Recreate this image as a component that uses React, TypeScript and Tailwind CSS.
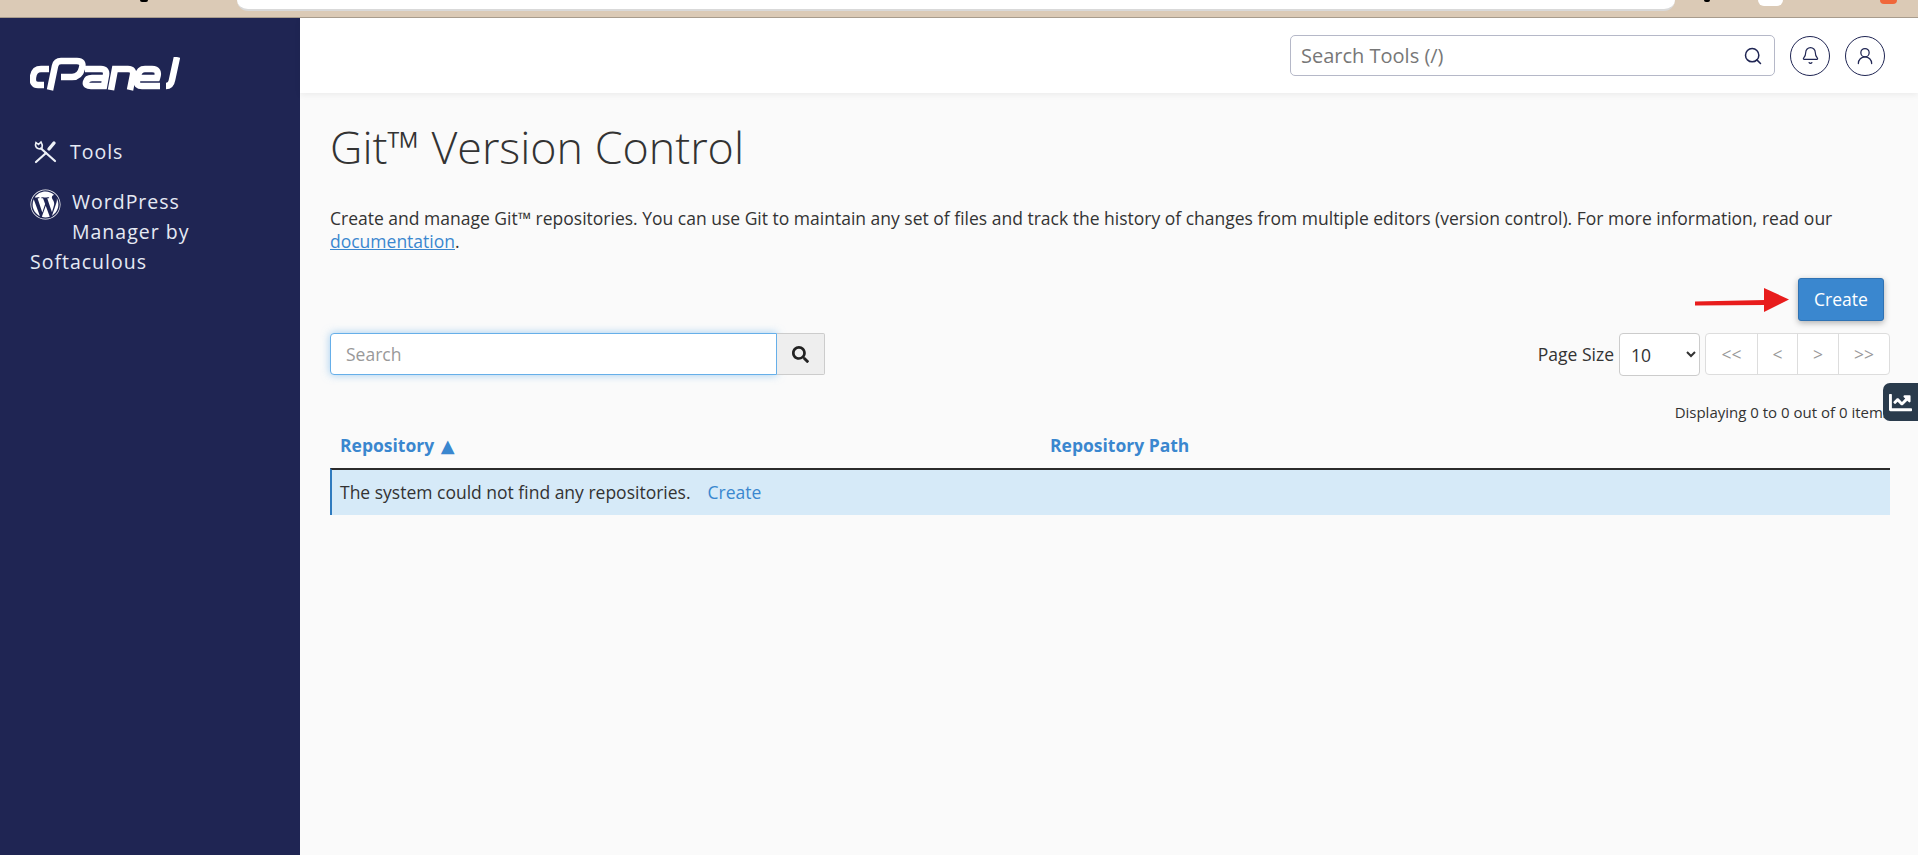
import { FaChartLine, FaSearch, FaWordpress } from "react-icons/fa";
import { Bell, Search, UserRound } from "lucide-react";

const CpanelLogo = () => (
  <svg width="150" height="34" viewBox="0 0 150 34" fill="none" stroke="#fff" strokeWidth="6.5" className="block">
    <path d="M19 12 H11 Q4 12 3 20 Q2 28 8 28 H14" />
    <path d="M20 33 L25 9 Q26 4 31 4 H47 Q54 4 52 11 Q50 20 42 20 H31" />
    <path d="M55 12 H71 Q77 12 76 18 L74 29 H61 Q55 29 56 25 Q57 21 62 21 H75" />
    <path d="M81 33 L85 12 H98 Q104 12 103 18 L100 33" />
    <path d="M108 21 H127 Q130 12 122 12 H115 Q109 12 108 19 L107 24 Q106 29 112 29 H130" />
    <path d="M147 0 L142 23 Q141 29 136 29" />
  </svg>
);

const ToolsIcon = () => (
  <svg width="24" height="24" viewBox="0 0 24 24" fill="none" stroke="#eef1f7" strokeWidth="2.2" strokeLinecap="round">
    <path d="M3 22 L13 13" />
    <path d="M16 9 L21 3" strokeWidth="3.4" />
    <path d="M8 8.5 L22 21" />
    <path d="M8 2 L5.5 4.5 L3 2.5 Q1.5 7 5 8.5 Q7 9.5 9 8 Q10 5 8 2 Z" strokeWidth="1.6" />
  </svg>
);

const RedArrow = () => (
  <svg width="94" height="26" viewBox="0 0 94 26" className="mr-[9px]">
    <path d="M0 14.5 L70 13 L70 18 L0 18.5 Z" fill="#e81c1c" />
    <path d="M69 1 L94 12.5 L69 25 Z" fill="#e81c1c" />
  </svg>
);

const pagerCells = [
  { label: "<<", width: "w-[51px]" },
  { label: "<", width: "w-[40px]" },
  { label: ">", width: "w-[41px]" },
  { label: ">>", width: "w-[51px]" },
];

const App = () => {
  return (
    <div className="relative w-full h-[855px] overflow-hidden flex flex-col bg-[#fafafa] text-[#333] font-['Open_Sans',sans-serif]">
      {/* cropped browser chrome */}
      <div className="relative h-[18px] shrink-0 bg-[#dbcab6] border-b border-[#a89c8d]">
        <div className="ml-[237px] w-[1438px] h-[11px] bg-white rounded-b-[14px] border-b-2 border-[#d9d9d9]" />
        <div className="absolute left-[140px] top-0 w-[8px] h-[2px] rounded-b-full bg-black" />
        <div className="absolute left-[1704px] top-0 w-[6px] h-[2px] rounded-b-full bg-black" />
        <div className="absolute left-[1758px] top-0 w-[25px] h-[6px] rounded-b-full bg-white" />
        <div className="absolute left-[1880px] top-0 w-[17px] h-[4px] rounded-b-md bg-[#f0673a]" />
      </div>

      <div className="flex flex-1 min-h-0">
        <aside className="w-[300px] shrink-0 bg-[#1f2553] text-[#e6eaf4] text-[19.5px] leading-[30px] tracking-[1px] pl-[30px] pr-[20px]">
          <div className="pt-[39px]">
            <CpanelLogo />
          </div>
          <div className="mt-[46px] flex items-center gap-[13px] pl-[3px]">
            <ToolsIcon />
            <span>Tools</span>
          </div>
          <div className="mt-[20px] w-[200px]">
            <FaWordpress className="float-left mr-[11px] mt-[2px] text-white" size={31} />
            WordPress Manager by Softaculous
          </div>
        </aside>

        <div className="flex-1 min-w-0 flex flex-col">
          <header className="h-[75px] shrink-0 bg-white shadow-[0_2px_6px_rgba(0,0,0,0.06)] flex items-center justify-end gap-[15px] pr-[33px]">
            <div className="w-[485px] h-[41px] border border-[#b5b8c8] rounded-[5px] bg-white flex items-center justify-between pl-[10px] pr-[11px]">
              <span className="text-[20px] text-[#777]">Search Tools (/)</span>
              <Search size={20} strokeWidth={1.8} className="text-[#1f2553]" />
            </div>
            <div className="w-[40px] h-[40px] rounded-full border border-[#1f2553] flex items-center justify-center">
              <Bell size={19} strokeWidth={1.5} className="text-[#1f2553]" />
            </div>
            <div className="w-[40px] h-[40px] rounded-full border border-[#1f2553] flex items-center justify-center">
              <UserRound size={20} strokeWidth={1.5} className="text-[#1f2553]" />
            </div>
          </header>

          <main className="pl-[30px] pr-[28px]">
            <h1 className="mt-[31px] text-[44.8px] leading-[46px] font-light">Git™ Version Control</h1>
            <p className="mt-[37px] text-[17.5px] leading-[23px]">
              Create and manage Git™ repositories. You can use Git to maintain any set of files and track the history of
              changes from multiple editors (version control). For more information, read our{" "}
              <a className="text-[#3a87cf] underline">documentation</a>.
            </p>

            <div className="mt-[25px] flex justify-end items-center pr-[6px]">
              <RedArrow />
              <button className="w-[86px] h-[43px] bg-[#3a87cf] border border-[#2f72b3] rounded-[3px] text-white text-[17.5px] shadow-[0_2px_6px_rgba(0,0,0,0.3)]">
                Create
              </button>
            </div>

            <div className="mt-[12px] flex justify-between items-start">
              <div className="flex">
                <input
                  placeholder="Search"
                  className="w-[447px] h-[42px] pl-[15px] text-[17.5px] bg-white border border-[#66afe9] rounded-l-[4px] shadow-[0_0_8px_rgba(102,175,233,0.6)] outline-none placeholder:text-[#999]"
                />
                <div className="w-[48px] h-[42px] bg-[#eeeeee] border border-[#cccccc] border-l-0 rounded-r-[2px] flex items-center justify-center text-[#222]">
                  <FaSearch size={17} />
                </div>
              </div>
              <div className="flex items-start">
                <span className="text-[17.5px] leading-[42px] mr-[5px]">Page Size</span>
                <select className="w-[81px] h-[43px] pl-[7px] text-[17.5px] bg-white border border-[#cccccc] rounded-[4px]">
                  <option>10</option>
                </select>
                <div className="ml-[5px] h-[42px] flex bg-white border border-[#dddddd] rounded-[4px] text-[17.5px] text-[#999]">
                  {pagerCells.map((cell, idx) => (
                    <div
                      key={cell.label}
                      className={`${cell.width} flex items-center justify-center ${idx > 0 ? "border-l border-[#dddddd]" : ""}`}
                    >
                      {cell.label}
                    </div>
                  ))}
                </div>
              </div>
            </div>

            <p className="mt-[26px] text-[15px] leading-[20px] text-right whitespace-nowrap">
              Displaying 0 to 0 out of 0 items
            </p>

            <div className="mt-[12px] flex text-[17.5px] leading-[22px] font-bold text-[#3a87cf] pl-[10px] h-[34px]">
              <span className="w-[710px]">
                Repository <span className="ml-[2px] font-['DejaVu_Sans',sans-serif] font-normal text-[18px]">▲</span>
              </span>
              <span>Repository Path</span>
            </div>
            <div className="h-[47px] flex items-center bg-[#d6eaf8] border-t-2 border-t-[#2b2b2b] border-l-2 border-l-[#2f7bbf] pl-[8px] text-[17.5px]">
              The system could not find any repositories.
              <a className="ml-[17px] text-[#3a87cf]">Create</a>
            </div>
          </main>
        </div>
      </div>

      {/* floating stats widget */}
      <div className="absolute left-[1883px] top-[383px] w-[35px] h-[38px] bg-[#2a3b4c] rounded-l-[7px] flex items-center justify-center text-white">
        <FaChartLine size={23} />
      </div>
    </div>
  );
};

export default App;
